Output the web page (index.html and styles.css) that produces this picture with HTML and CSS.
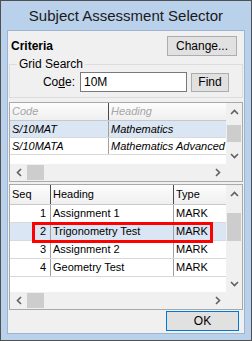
FILE: index.html
```html
<!DOCTYPE html>
<html lang="en">
<head>
  <meta charset="UTF-8">
  <title>Subject Assessment Selector</title>
  <link rel="stylesheet" href="styles.css">
</head>
<body>
  <div class="window">
    <div class="titlebar">Subject Assessment Selector</div>
    <div class="client">
      <div class="criteria-row">
        <span class="criteria">Criteria</span>
        <button class="btn change-btn">Change...</button>
      </div>

      <fieldset class="group">
        <legend>Grid Search</legend>
        <div class="search-row">
          <label class="code-label">Co<u>d</u>e:</label>
          <input class="code-input" type="text" value="10M">
          <button class="btn find-btn">Find</button>
        </div>
      </fieldset>

      <div class="grid subjects">
        <div class="table">
          <div class="row head">
            <div class="cell">Code</div>
            <div class="cell">Heading</div>
          </div>
          <div class="row selected">
            <div class="cell">S/10MAT</div>
            <div class="cell">Mathematics</div>
          </div>
          <div class="row">
            <div class="cell">S/10MATA</div>
            <div class="cell">Mathematics Advanced</div>
          </div>
        </div>
        <div class="vscroll">
          <div class="arrow"><svg width="9" height="6" viewBox="0 0 9 6"><polyline points="1,5 4.5,1.5 8,5" /></svg></div>
          <div class="track"><div class="thumb"></div></div>
          <div class="arrow"><svg width="9" height="6" viewBox="0 0 9 6"><polyline points="1,1 4.5,4.5 8,1" /></svg></div>
        </div>
        <div class="hscroll">
          <div class="arrow"><svg width="6" height="9" viewBox="0 0 6 9"><polyline points="5,1 1.5,4.5 5,8" /></svg></div>
          <div class="track"><div class="thumb"></div></div>
          <div class="arrow"><svg width="6" height="9" viewBox="0 0 6 9"><polyline points="1,1 4.5,4.5 1,8" /></svg></div>
        </div>
        <div class="corner"></div>
      </div>

      <div class="grid assessments">
        <div class="table">
          <div class="row head">
            <div class="cell">Seq</div>
            <div class="cell">Heading</div>
            <div class="cell">Type</div>
          </div>
          <div class="row">
            <div class="cell num">1</div>
            <div class="cell">Assignment 1</div>
            <div class="cell">MARK</div>
          </div>
          <div class="row selected">
            <div class="cell num">2</div>
            <div class="cell">Trigonometry Test</div>
            <div class="cell">MARK</div>
          </div>
          <div class="row">
            <div class="cell num">3</div>
            <div class="cell">Assignment 2</div>
            <div class="cell">MARK</div>
          </div>
          <div class="row">
            <div class="cell num">4</div>
            <div class="cell">Geometry Test</div>
            <div class="cell">MARK</div>
          </div>
          <div class="highlight"></div>
        </div>
        <div class="vscroll">
          <div class="arrow"><svg width="9" height="6" viewBox="0 0 9 6"><polyline points="1,5 4.5,1.5 8,5" /></svg></div>
          <div class="track"><div class="thumb"></div></div>
          <div class="arrow"><svg width="9" height="6" viewBox="0 0 9 6"><polyline points="1,1 4.5,4.5 8,1" /></svg></div>
        </div>
        <div class="hscroll">
          <div class="arrow"><svg width="6" height="9" viewBox="0 0 6 9"><polyline points="5,1 1.5,4.5 5,8" /></svg></div>
          <div class="track"><div class="thumb"></div></div>
          <div class="arrow"><svg width="6" height="9" viewBox="0 0 6 9"><polyline points="1,1 4.5,4.5 1,8" /></svg></div>
        </div>
        <div class="corner"></div>
      </div>

      <div class="footer">
        <button class="btn ok-btn">OK</button>
      </div>
    </div>
  </div>
</body>
</html>
```

FILE: styles.css
```css
* {
  box-sizing: border-box;
}
body {
  margin: 0;
  font-family: "Liberation Sans", Arial, sans-serif;
  font-size: 12px;
  color: #000;
}
.window {
  width: 252px;
  height: 341px;
  border: 1px solid #505050;
  background-color: #b9d1ea;
  padding: 0 6px 6px;
  display: flex;
  flex-direction: column;
}
.titlebar {
  height: 29px;
  line-height: 30px;
  text-align: center;
  font-size: 15px;
  color: #1a1a1a;
}
.client {
  flex: 1;
  border: 1px solid #9db3cf;
  background-color: #f0f0f0;
  padding: 0 1px;
  display: flex;
  flex-direction: column;
}

/* buttons */
.btn {
  font-family: inherit;
  font-size: 12px;
  background-color: #e1e1e1;
  border: 1px solid #adadad;
  padding: 0;
  height: 20px;
  color: #000;
}

.criteria-row {
  display: flex;
  justify-content: space-between;
  align-items: center;
  margin-top: 5px;
  height: 20px;
  padding-left: 2px;
}
.criteria {
  font-weight: bold;
}
.change-btn {
  width: 70px;
  margin-right: 6px;
}

/* group box */
.group {
  margin: 1px 0 0;
  border: 1px solid #dcdcdc;
  padding: 1px 13px 5px 7px;
}
.group legend {
  padding: 0 2px;
  line-height: 14px;
}
.search-row {
  display: flex;
  align-items: center;
  justify-content: flex-end;
  height: 20px;
}
.code-label {
  margin-right: 5px;
}
.code-input {
  width: 107px;
  height: 20px;
  border: 1px solid #7a7a7a;
  font-family: inherit;
  font-size: 12px;
  padding: 0 3px;
  margin: 0 4px 0 0;
  background: #fff;
}
.find-btn {
  width: 38px;
  height: 19px;
}

/* data grids */
.grid {
  border: 1px solid #a9a9a9;
  background-color: #fff;
  display: grid;
  grid-template-columns: 1fr 16px;
  grid-template-rows: 1fr 17px;
  font-size: 11px;
}
.subjects {
  margin-top: 4px;
  height: 80px;
}
.assessments {
  margin-top: 2px;
  height: 126px;
}
.table {
  position: relative;
  overflow: hidden;
}
.row {
  display: grid;
  height: 17px;
  border-bottom: 1px solid #d9d9d9;
}
.row .cell {
  padding-left: 2px;
  line-height: 16px;
  white-space: nowrap;
  overflow: hidden;
  border-right: 1px solid #a0a0a0;
}
.row .cell:last-child {
  border-right: none;
}
.row.head {
  background: linear-gradient(#fdfdfd, #efefef);
  border-bottom: 1px solid #c8c8c8;
}
.row.head .cell {
  border-right: 1px solid #4a4a4a;
}
.row.head .cell:last-child {
  border-right: none;
}
.row.selected {
  background-color: #dae6f3;
}

.subjects .row {
  grid-template-columns: 99px 1fr;
  font-style: italic;
}
.subjects .row.head {
  height: 18px;
  color: #a6a6a6;
}
.subjects .row.head .cell {
  line-height: 17px;
}

.assessments .row {
  grid-template-columns: 41px 123px 1fr;
  height: 18px;
}
.assessments .row .cell {
  line-height: 17px;
}
.assessments .row.head {
  height: 20px;
}
.assessments .row.head .cell {
  line-height: 19px;
}
.cell.num {
  text-align: right;
  padding-right: 4px;
}

.highlight {
  position: absolute;
  left: 22px;
  top: 37px;
  width: 181px;
  height: 21px;
  border: 3px solid #ff0000;
}

/* scrollbars */
.vscroll, .hscroll, .corner {
  background-color: #f0f0f0;
}
.vscroll {
  display: flex;
  flex-direction: column;
}
.hscroll {
  display: flex;
}
.arrow {
  display: flex;
  align-items: center;
  justify-content: center;
  flex: 0 0 17px;
}
.arrow polyline {
  fill: none;
  stroke: #606060;
  stroke-width: 1.6;
}
.track {
  flex: 1;
  display: flex;
}
.vscroll .track {
  flex-direction: column;
  padding: 5px 1px 0;
}
.vscroll .thumb {
  height: 17px;
  background-color: #cdcdcd;
}
.assessments .vscroll .thumb {
  margin-top: 6px;
  height: 28px;
}
.hscroll .track {
  padding: 1px 0;
}
.hscroll .thumb {
  width: 17px;
  background-color: #cdcdcd;
}

.footer {
  display: flex;
  justify-content: flex-end;
  padding-top: 1px;
}
.ok-btn {
  width: 73px;
  border-color: #0078d7;
  margin-right: 4px;
}
```
